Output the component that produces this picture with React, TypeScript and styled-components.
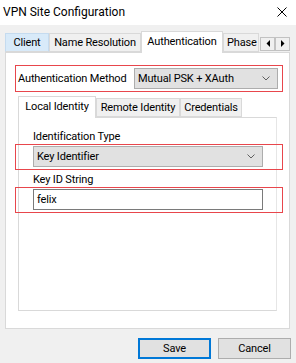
import * as React from "react";
import styled, { createGlobalStyle } from "styled-components";

const GlobalStyle = createGlobalStyle`
    html, body {
        margin: 0;
        padding: 0;
        background: #f0f0f0;
    }
    body {
        font-family: Roboto, "Liberation Sans", sans-serif;
        font-size: 11px;
        letter-spacing: -0.15px;
        color: #000;
    }
`;

const Window = styled.div`
    width: 296px;
    height: 363px;
    background: #f0f0f0;
    display: flex;
    flex-direction: column;
    overflow: hidden;
`;

const TitleBar = styled.div`
    height: 25px;
    background: #fff;
    display: flex;
    align-items: center;
    justify-content: space-between;
    padding: 0 9px 1px 3px;
    box-sizing: border-box;
    font-size: 12px;
    letter-spacing: 0;
`;

const Body = styled.div`
    flex: 1;
    display: flex;
    flex-direction: column;
    padding: 6px 5px 4px 5px;
`;

const TabStrip = styled.div`
    display: flex;
    align-items: flex-end;
    height: 21px;
    position: relative;
    z-index: 1;
`;

interface TabProps {
    active?: boolean;
    hover?: boolean;
    width: number;
}

const Tab = styled.div<TabProps>`
    box-sizing: border-box;
    flex: none;
    width: ${(p) => p.width}px;
    height: ${(p) => (p.active ? 22 : 19)}px;
    margin-bottom: ${(p) => (p.active ? -1 : 0)}px;
    padding-top: ${(p) => (p.active ? 2 : 1)}px;
    border: 1px solid ${(p) => (p.hover ? "#c5dbef" : "#d9d9d9")};
    border-bottom: ${(p) => (p.active ? "none" : "1px solid #d9d9d9")};
    background: ${(p) => (p.active ? "#fff" : p.hover ? "#d8eaf9" : "#f0f0f0")};
    text-align: center;
    white-space: nowrap;
    overflow: hidden;
    line-height: 15px;
`;

const ClippedTab = styled(Tab)`
    text-align: left;
    padding-left: 3px;
`;

const ScrollArrows = styled.div`
    display: flex;
    align-self: center;
    margin-top: 4px;
    margin-left: auto;
    margin-right: 1px;
`;

const ArrowButton = styled.div`
    width: 15px;
    height: 14px;
    box-sizing: border-box;
    border: 1px solid #c2c2c2;
    background: #f0f0f0;
    display: flex;
    align-items: center;
    justify-content: center;
`;

const Panel = styled.div`
    height: 277px;
    box-sizing: border-box;
    margin-right: 1px;
    background: #fff;
    border: 1px solid #d9d9d9;
    display: flex;
    flex-direction: column;
    padding: 12px 6px 0 9px;
`;

const Highlight = styled.div`
    border: 1px solid #e8464c;
    box-sizing: border-box;
`;

const MethodRow = styled(Highlight)`
    display: flex;
    align-items: center;
    justify-content: space-between;
    height: 27px;
    padding: 0 4px 0 2px;
    white-space: nowrap;
`;

interface SelectProps {
    width: number;
}

const Select = styled.div<SelectProps>`
    width: ${(p) => p.width}px;
    height: 21px;
    box-sizing: border-box;
    background: #e1e1e1;
    border: 1px solid #adadad;
    display: flex;
    align-items: center;
    justify-content: space-between;
    padding: 0 7px 0 3px;
`;

const InnerArea = styled.div`
    display: flex;
    flex-direction: column;
    margin: 4px 6px 0 3px;
`;

const InnerPanel = styled.div`
    height: 194px;
    box-sizing: border-box;
    border: 1px solid #d9d9d9;
    border-right-color: #e6e6e6;
    display: flex;
    flex-direction: column;
    padding: 12px 0 0 14px;
`;

const FieldLabel = styled.div`
    line-height: 14px;
`;

const FieldBox = styled(Highlight)`
    margin: 0 -7px 3px -18px;
    padding: 1px 19px 0 17px;
    height: 26px;
`;

const TextInput = styled.div`
    width: 230px;
    height: 21px;
    box-sizing: border-box;
    border: 1px solid #7a7a7a;
    background: #fff;
    display: flex;
    align-items: center;
    padding-left: 3px;
`;

const ButtonRow = styled.div`
    display: flex;
    justify-content: flex-end;
    gap: 7px;
    margin-top: 9px;
`;

interface ButtonProps {
    primary?: boolean;
}

const Button = styled.div<ButtonProps>`
    width: 73px;
    height: 21px;
    box-sizing: border-box;
    background: #e1e1e1;
    border: ${(p) => (p.primary ? "2px solid #0078d7" : "1px solid #adadad")};
    display: flex;
    align-items: center;
    justify-content: center;
`;

function Chevron(): JSX.Element {
    return (
        <svg width="8" height="5" viewBox="0 0 8 5">
            <path d="M0.5 0.5 L4 4 L7.5 0.5" fill="none" stroke="#606060" strokeWidth="1" />
        </svg>
    );
}

function Arrow(props: { dir: "left" | "right" }): JSX.Element {
    return (
        <svg width="4" height="7" viewBox="0 0 4 7">
            {props.dir === "left" ? <path d="M4 0 L0.5 3.5 L4 7 Z" fill="#000" /> : <path d="M0 0 L3.5 3.5 L0 7 Z" fill="#000" />}
        </svg>
    );
}

function CloseIcon(): JSX.Element {
    return (
        <svg width="10" height="10" viewBox="0 0 10 10">
            <path d="M0.5 0.5 L9.5 9.5 M9.5 0.5 L0.5 9.5" stroke="#000" strokeWidth="1" />
        </svg>
    );
}

export default function App(): JSX.Element {
    return (
        <Window>
            <GlobalStyle />
            <TitleBar>
                <span>VPN Site Configuration</span>
                <CloseIcon />
            </TitleBar>
            <Body>
                <TabStrip>
                    <Tab width={44} hover>Client</Tab>
                    <Tab width={92}>Name Resolution</Tab>
                    <Tab width={82} active>Authentication</Tab>
                    <ClippedTab width={36}>Phase 1</ClippedTab>
                    <ScrollArrows>
                        <ArrowButton><Arrow dir="left" /></ArrowButton>
                        <ArrowButton><Arrow dir="right" /></ArrowButton>
                    </ScrollArrows>
                </TabStrip>
                <Panel>
                    <MethodRow>
                        <span>Authentication Method</span>
                        <Select width={144}>
                            <span>Mutual PSK + XAuth</span>
                            <Chevron />
                        </Select>
                    </MethodRow>
                    <InnerArea>
                        <TabStrip>
                            <Tab width={78} active>Local Identity</Tab>
                            <Tab width={84}>Remote Identity</Tab>
                            <Tab width={62}>Credentials</Tab>
                        </TabStrip>
                        <InnerPanel>
                            <FieldLabel>Identification Type</FieldLabel>
                            <FieldBox>
                                <Select width={230}>
                                    <span>Key Identifier</span>
                                    <Chevron />
                                </Select>
                            </FieldBox>
                            <FieldLabel>Key ID String</FieldLabel>
                            <FieldBox>
                                <TextInput>felix</TextInput>
                            </FieldBox>
                        </InnerPanel>
                    </InnerArea>
                </Panel>
                <ButtonRow>
                    <Button primary>Save</Button>
                    <Button>Cancel</Button>
                </ButtonRow>
            </Body>
        </Window>
    );
}
